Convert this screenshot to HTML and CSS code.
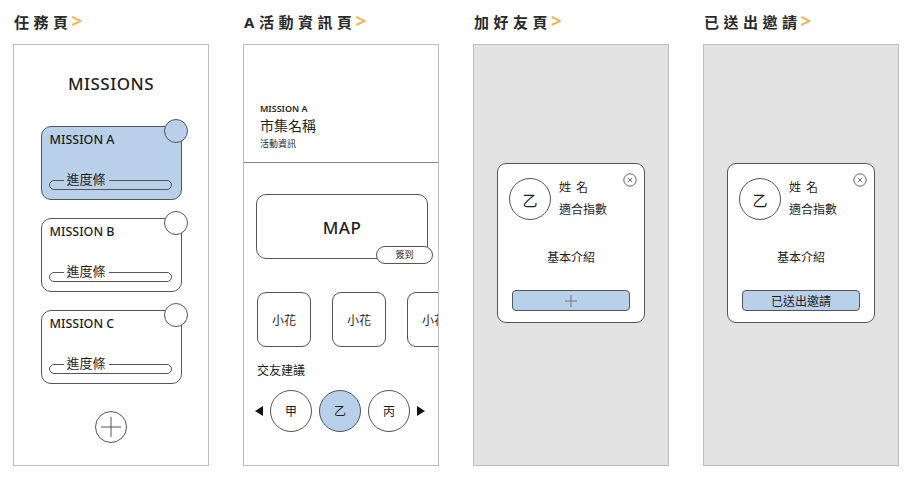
FILE: index.html
```html
<!DOCTYPE html>
<html>
<head>
    <meta charset='utf-8'>
    <title>Wireframes</title>
    <meta name='viewport' content='width=device-width, initial-scale=1'>
    <link rel="stylesheet" href="styles.css">
</head>
<body>
<div class="board">

    <section class="screen">
        <h2 class="screen-title">任務頁<span class="arrow">&gt;</span></h2>
        <div class="phone missions">
            <div class="missions-title">MISSIONS</div>
            <div class="mission-list">
                <div class="mission active">
                    <span class="mission-dot"></span>
                    <div class="mission-name">MISSION A</div>
                    <div class="progress"><span class="progress-label">進度條</span></div>
                </div>
                <div class="mission">
                    <span class="mission-dot"></span>
                    <div class="mission-name">MISSION B</div>
                    <div class="progress"><span class="progress-label">進度條</span></div>
                </div>
                <div class="mission">
                    <span class="mission-dot"></span>
                    <div class="mission-name">MISSION C</div>
                    <div class="progress"><span class="progress-label">進度條</span></div>
                </div>
            </div>
            <div class="add-btn">
                <svg width="30" height="30" viewBox="0 0 30 30">
                    <line x1="5" y1="15" x2="25" y2="15" stroke="#555" stroke-width="1"/>
                    <line x1="15" y1="5" x2="15" y2="25" stroke="#555" stroke-width="1"/>
                </svg>
            </div>
        </div>
    </section>

    <section class="screen">
        <h2 class="screen-title">A活動資訊頁<span class="arrow">&gt;</span></h2>
        <div class="phone activity">
            <div class="activity-head">
                <div class="small-label">MISSION A</div>
                <div class="market-name">市集名稱</div>
                <div class="info">活動資訊</div>
            </div>
            <div class="map">
                MAP
                <span class="checkin">簽到</span>
            </div>
            <div class="flowers">
                <div class="flower">小花</div>
                <div class="flower">小花</div>
                <div class="flower">小花</div>
            </div>
            <div class="suggest-title">交友建議</div>
            <div class="friends">
                <span class="tri tri-left"></span>
                <div class="friend">甲</div>
                <div class="friend active">乙</div>
                <div class="friend">丙</div>
                <span class="tri tri-right"></span>
            </div>
        </div>
    </section>

    <section class="screen">
        <h2 class="screen-title">加好友頁<span class="arrow">&gt;</span></h2>
        <div class="phone gray">
            <div class="profile">
                <svg class="close" width="14" height="14" viewBox="0 0 14 14">
                    <circle cx="7" cy="7" r="6.2" fill="none" stroke="#555" stroke-width="0.9"/>
                    <line x1="4.8" y1="4.8" x2="9.2" y2="9.2" stroke="#555" stroke-width="0.9"/>
                    <line x1="9.2" y1="4.8" x2="4.8" y2="9.2" stroke="#555" stroke-width="0.9"/>
                </svg>
                <div class="profile-top">
                    <div class="avatar">乙</div>
                    <div class="profile-text">
                        <div class="spaced">姓 名</div>
                        <div>適合指數</div>
                    </div>
                </div>
                <div class="intro">基本介紹</div>
                <div class="action">
                    <svg width="14" height="14" viewBox="0 0 14 14">
                        <line x1="1" y1="7" x2="13" y2="7" stroke="#777" stroke-width="1"/>
                        <line x1="7" y1="1" x2="7" y2="13" stroke="#777" stroke-width="1"/>
                    </svg>
                </div>
            </div>
        </div>
    </section>

    <section class="screen">
        <h2 class="screen-title">已送出邀請<span class="arrow">&gt;</span></h2>
        <div class="phone gray">
            <div class="profile">
                <svg class="close" width="14" height="14" viewBox="0 0 14 14">
                    <circle cx="7" cy="7" r="6.2" fill="none" stroke="#555" stroke-width="0.9"/>
                    <line x1="4.8" y1="4.8" x2="9.2" y2="9.2" stroke="#555" stroke-width="0.9"/>
                    <line x1="9.2" y1="4.8" x2="4.8" y2="9.2" stroke="#555" stroke-width="0.9"/>
                </svg>
                <div class="profile-top">
                    <div class="avatar">乙</div>
                    <div class="profile-text">
                        <div class="spaced">姓 名</div>
                        <div>適合指數</div>
                    </div>
                </div>
                <div class="intro">基本介紹</div>
                <div class="action">已送出邀請</div>
            </div>
        </div>
    </section>

</div>
</body>
</html>
```

FILE: styles.css
```css
* {
    font-family: "Noto Sans", "Noto Sans CJK TC", sans-serif;
}

html, body {
    margin: 0;
    padding: 0;
    background: #fff;
    color: #1e1e1e;
}

.board {
    display: flex;
    gap: 34px;
    padding: 12px 0 0 13px;
}

.screen {
    width: 196px;
}

.screen-title {
    height: 20px;
    margin: 0 0 12px;
    padding-left: 1px;
    font-size: 15px;
    line-height: 20px;
    font-weight: 700;
    letter-spacing: 4.5px;
    color: #2a2a2a;
}

.screen-title .arrow {
    color: #f5b253;
    font-weight: 700;
    font-size: 19px;
    line-height: 16px;
    letter-spacing: 0;
    margin-left: -1px;
}

.phone {
    box-sizing: border-box;
    height: 422px;
    border: 1px solid #bdbdbd;
    background: #fff;
    overflow: hidden;
}

.phone.gray {
    background: #e2e2e2;
    display: flex;
    justify-content: center;
    align-items: flex-start;
    padding-top: 118px;
}

/* missions */
.missions {
    display: flex;
    flex-direction: column;
    align-items: center;
    padding-top: 29px;
}

.missions-title {
    font-size: 17px;
    line-height: 20px;
    font-weight: 500;
    letter-spacing: 0.5px;
    margin-bottom: 32px;
}

.mission-list {
    display: flex;
    flex-direction: column;
    gap: 18px;
}

.mission {
    position: relative;
    box-sizing: border-box;
    width: 141px;
    height: 74px;
    border: 1px solid #555;
    border-radius: 10px;
    background: #fff;
    padding: 5px 9px 9px 7px;
    display: flex;
    flex-direction: column;
}

.mission.active {
    background: #b9d0ea;
}

.mission-dot {
    position: absolute;
    top: -8px;
    right: -7px;
    box-sizing: border-box;
    width: 24px;
    height: 24px;
    border: 1px solid #555;
    border-radius: 50%;
    background: #fff;
}

.mission.active .mission-dot {
    background: #b9d0ea;
}

.mission-name {
    font-size: 12.5px;
    line-height: 16px;
    font-weight: 500;
    padding-left: 1px;
}

.progress {
    position: relative;
    margin-top: auto;
    box-sizing: border-box;
    height: 10px;
    border: 1px solid #555;
    border-radius: 6px;
    background: inherit;
}

.progress-label {
    position: absolute;
    left: 14px;
    top: -10px;
    padding: 0 3px;
    font-size: 13px;
    line-height: 16px;
    background: inherit;
}

.add-btn {
    margin-top: 27px;
    box-sizing: border-box;
    width: 32px;
    height: 32px;
    border: 1px solid #555;
    border-radius: 50%;
    display: flex;
    align-items: center;
    justify-content: center;
}

/* activity */
.activity-head {
    box-sizing: border-box;
    height: 118px;
    padding: 58px 16px 0;
    border-bottom: 1px solid #888;
}

.small-label {
    font-size: 9px;
    line-height: 12px;
    font-weight: 600;
}

.market-name {
    margin-top: 2px;
    font-size: 14px;
    line-height: 18px;
}

.info {
    margin-top: 3px;
    font-size: 9px;
    line-height: 12px;
}

.map {
    position: relative;
    box-sizing: border-box;
    width: 172px;
    height: 65px;
    margin: 31px 0 0 12px;
    border: 1px solid #555;
    border-radius: 10px;
    display: flex;
    align-items: center;
    justify-content: center;
    font-size: 17px;
    font-weight: 500;
    letter-spacing: 0.5px;
    padding-top: 2px;
}

.checkin {
    position: absolute;
    right: -6px;
    bottom: -6px;
    box-sizing: border-box;
    width: 57px;
    height: 18px;
    border: 1px solid #555;
    border-radius: 9px;
    background: #fff;
    font-size: 9px;
    font-weight: 400;
    line-height: 16px;
    text-align: center;
    letter-spacing: 0;
}

.flowers {
    display: flex;
    gap: 21px;
    margin: 33px 0 0 13px;
}

.flower {
    flex: none;
    box-sizing: border-box;
    width: 54px;
    height: 55px;
    border: 1px solid #555;
    border-radius: 9px;
    display: flex;
    align-items: center;
    justify-content: center;
    font-size: 12px;
}

.suggest-title {
    margin: 16px 0 0 13px;
    font-size: 12px;
    line-height: 16px;
}

.friends {
    display: flex;
    align-items: center;
    gap: 7px;
    margin: 11px 0 0 11px;
}

.friend {
    box-sizing: border-box;
    width: 42px;
    height: 42px;
    border: 1px solid #555;
    border-radius: 50%;
    background: #fff;
    display: flex;
    align-items: center;
    justify-content: center;
    font-size: 12px;
}

.friend.active {
    background: #b9d0ea;
}

.tri {
    width: 0;
    height: 0;
    border-top: 5px solid transparent;
    border-bottom: 5px solid transparent;
}

.tri-left {
    border-right: 8px solid #111;
}

.tri-right {
    border-left: 8px solid #111;
}

/* friend card */
.profile {
    position: relative;
    box-sizing: border-box;
    width: 148px;
    height: 160px;
    border: 1px solid #555;
    border-radius: 9px;
    background: #fff;
    padding: 13px 14px 13px 14px;
}

.close {
    position: absolute;
    top: 9px;
    right: 7px;
}

.profile-top {
    display: flex;
    align-items: center;
    gap: 8px;
    margin-left: -3px;
}

.avatar {
    box-sizing: border-box;
    width: 42px;
    height: 42px;
    border: 1px solid #555;
    border-radius: 50%;
    display: flex;
    align-items: center;
    justify-content: center;
    font-size: 15px;
}

.profile-text {
    font-size: 12px;
    line-height: 22px;
}

.profile-text .spaced {
    letter-spacing: 1px;
}

.intro {
    margin-top: 29px;
    text-align: center;
    font-size: 12px;
    line-height: 16px;
}

.action {
    box-sizing: border-box;
    width: 118px;
    height: 21px;
    margin-top: 24px;
    border: 1px solid #555;
    border-radius: 4px;
    background: #b9d0ea;
    display: flex;
    align-items: center;
    justify-content: center;
    font-size: 12px;
}
```
